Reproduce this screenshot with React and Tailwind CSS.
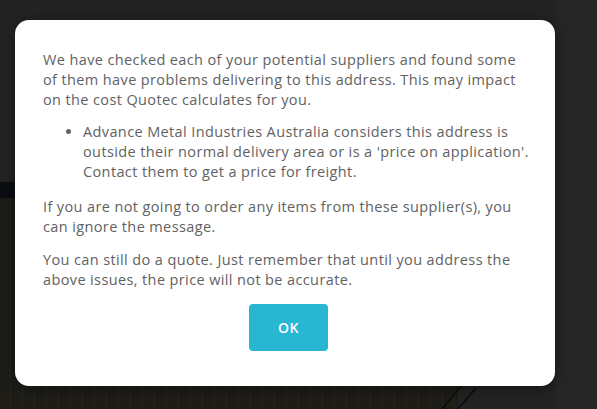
export default function App() {
    return (
        <div className="relative h-[409px] w-full overflow-hidden bg-[#232323]" style={{ fontFamily: '"Open Sans", sans-serif' }}>
            {/* backdrop scenery behind the modal */}
            <div className="absolute inset-0">
                <div className="absolute left-0 top-[182px] h-[20px] w-[60px] bg-[#0b0d12]" />
                <div className="absolute left-0 top-[198px] h-[211px] w-[458px] bg-[repeating-linear-gradient(90deg,#1d1c17_0px,#1d1c17_9px,#23221c_10px,#1d1c17_12px)]" />
                <svg className="absolute left-[430px] top-[380px]" width="60" height="29" viewBox="0 0 60 29">
                    <line x1="33" y1="4" x2="12" y2="29" stroke="#0c0c0c" strokeWidth="1.5" />
                    <line x1="46" y1="8" x2="28" y2="29" stroke="#0c0c0c" strokeWidth="1.5" />
                </svg>
                <div className="absolute right-0 top-0 h-full w-[42px] bg-[#262626]" />
            </div>

            <div className="relative ml-[15px] pt-[20px]">
                <div className="w-[540px] rounded-[14px] bg-white pb-[35px] pl-[28px] pr-[26px] pt-[30px] text-[14.5px] leading-[20px] tracking-[0.38px] text-[#626262] shadow-[0_2px_14px_rgba(0,0,0,0.45)]">
                    <p className="mb-[12px]">
                        We have checked each of your potential suppliers and found some of them have problems delivering to this address. This may impact on the cost Quotec calculates for you.
                    </p>
                    <ul className="mb-[15px] list-disc pl-[40px]">
                        <li>
                            Advance Metal Industries Australia considers this address is outside their normal delivery area or is a 'price on application'. Contact them to get a price for freight.
                        </li>
                    </ul>
                    <p className="mb-[13px]">
                        If you are not going to order any items from these supplier(s), you can ignore the message.
                    </p>
                    <p>
                        You can still do a quote. Just remember that until you address the above issues, the price will not be accurate.
                    </p>
                    <div className="mt-[14px] flex justify-center">
                        <button className="ml-[5px] h-[47px] w-[79px] rounded-[4px] bg-[#29b6d3] text-[14px] font-semibold tracking-[0.5px] text-white">
                            OK
                        </button>
                    </div>
                </div>
            </div>
        </div>
    );
}
